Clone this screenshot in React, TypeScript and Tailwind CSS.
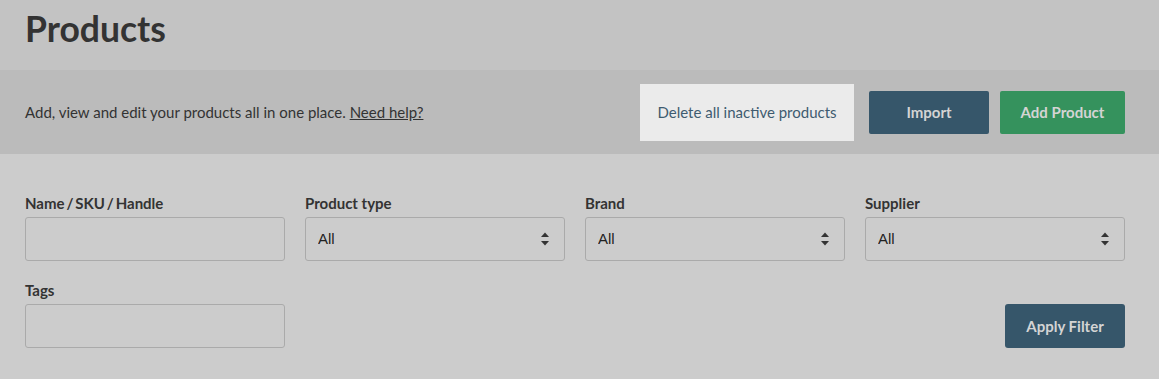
import React from 'react';

const SelectArrows = () => (
    <svg width="10" height="17" viewBox="0 0 10 17" className="pointer-events-none absolute right-[15px] top-1/2 -translate-y-1/2">
        <path d="M1 6.5 L5 2 L9 6.5 Z" fill="#333" />
        <path d="M1 10.5 L5 15 L9 10.5 Z" fill="#333" />
    </svg>
);

const FilterSelect: React.FC<{ label: string }> = ({ label }) => (
    <div className="flex flex-col">
        <label className="text-[15px] font-bold text-[#333] leading-[19px] mb-[4px]">{label}</label>
        <div className="relative">
            <select
                className="w-full h-[44px] appearance-none bg-transparent border border-[#aaaaaa] rounded-[3px] pl-[12px] pt-[1px] text-[15px] text-[#222] outline-none"
                style={{ fontFamily: '"Liberation Sans", Arial, sans-serif' }}
            >
                <option>All</option>
            </select>
            <SelectArrows />
        </div>
    </div>
);

const FilterInput: React.FC<{ label: string }> = ({ label }) => (
    <div className="flex flex-col">
        <label className="text-[15px] font-bold text-[#333] leading-[19px] mb-[4px]">{label}</label>
        <input className="w-full h-[44px] bg-transparent border border-[#aaaaaa] rounded-[3px] px-[12px] outline-none" />
    </div>
);

export default function App() {
    return (
        <div className="w-[1159px] h-[379px] bg-[#cccccc] overflow-hidden" style={{ fontFamily: 'Lato, "Open Sans", sans-serif' }}>
            <div className="h-[70px] bg-[#c3c3c3] px-[25px] flex items-center">
                <h1 className="text-[35.5px] font-bold text-[#333] leading-none -mt-[12px]">Products</h1>
            </div>

            <div className="h-[84px] bg-[#bbbbbb] pl-[25px] pr-[34px] flex items-center justify-between">
                <p className="text-[15px] text-[#333]">
                    Add, view and edit your products all in one place. <a href="#" className="underline">Need help?</a>
                </p>
                <div className="flex items-center">
                    <button className="w-[214px] h-[57px] bg-[#ebebeb] text-[#3e5b70] text-[15px]">Delete all inactive products</button>
                    <button className="ml-[15px] w-[120px] h-[43px] bg-[#36566a] text-[#d4d4d4] text-[15px] font-bold rounded-[2px]">Import</button>
                    <button className="ml-[11px] w-[125px] h-[43px] bg-[#35925d] text-[#d4d4d4] text-[15px] font-bold rounded-[2px]">Add Product</button>
                </div>
            </div>

            <div className="px-[25px] pt-[40px]">
                <div className="grid grid-cols-4 gap-x-[20px] w-[1100px]">
                    <FilterInput label={'Name\u2009/\u2009SKU\u2009/\u2009Handle'} />
                    <FilterSelect label="Product type" />
                    <FilterSelect label="Brand" />
                    <FilterSelect label="Supplier" />
                </div>
                <div className="flex items-end justify-between w-[1100px] mt-[20px]">
                    <div className="w-[260px]">
                        <FilterInput label="Tags" />
                    </div>
                    <button className="w-[120px] h-[44px] bg-[#36566a] text-[#d4d4d4] text-[15px] font-bold rounded-[3px]">Apply Filter</button>
                </div>
            </div>
        </div>
    );
}
